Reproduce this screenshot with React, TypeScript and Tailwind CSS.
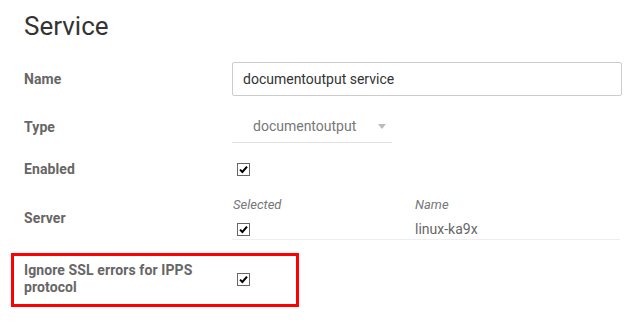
import React from 'react';

function Check() {
  return (
    <span className="flex h-[13px] w-[13px] items-center justify-center border border-[#666] bg-white">
      <svg viewBox="0 0 11 11" className="h-[11px] w-[11px]">
        <path d="M2 5.6 L4.4 8 L9 2.6" fill="none" stroke="#000" strokeWidth={2} />
      </svg>
    </span>
  );
}

function Label({ children }: { children: React.ReactNode }) {
  return (
    <div className="w-[208px] shrink-0 pr-[12px] text-[14px] font-bold leading-[17px] tracking-[0.1px] text-[#666]">
      {children}
    </div>
  );
}

export default function App() {
  return (
    <div className="h-[325px] w-[634px] overflow-hidden bg-white px-6 font-['Roboto',sans-serif]">
      <h1 className="pt-[11px] text-[26px] leading-[30px] text-[#333]">Service</h1>

      {/* Name */}
      <div className="mt-[21px] flex h-[34px] items-center">
        <Label>Name</Label>
        <div className="flex h-[34px] w-[390px] shrink-0 items-center rounded-[2px] border border-[#ccc] px-[10px] text-[14px] text-[#333]">
          documentoutput service
        </div>
      </div>

      {/* Type */}
      <div className="mt-[15px] flex h-[32px] items-center">
        <Label>Type</Label>
        <div className="flex h-[32px] w-[160px] shrink-0 items-center border-b border-[#e0e0e0] pl-[21px] text-[14px] text-[#777]">
          <span>documentoutput</span>
          <span className="ml-[22px] h-0 w-0 border-x-[4.5px] border-t-[5px] border-x-transparent border-t-[#bbb]" />
        </div>
      </div>

      {/* Enabled */}
      <div className="mt-[17px] flex h-[18px] items-center">
        <Label>Enabled</Label>
        <div className="pl-[5px]">
          <Check />
        </div>
      </div>

      {/* Server */}
      <div className="mt-[18px] flex items-center">
        <Label>Server</Label>
        <div className="w-[388px] shrink-0">
          <div className="flex h-[18px] items-center text-[13px] italic text-[#777]">
            <span className="w-[183px] pl-[1px]">Selected</span>
            <span>Name</span>
          </div>
          <div className="flex h-[26px] items-center border-b border-[#eee] pt-[6px]">
            <span className="w-[183px] pl-[5px]">
              <Check />
            </span>
            <span className="text-[14px] text-[#666]">linux-ka9x</span>
          </div>
        </div>
      </div>

      {/* Ignore SSL */}
      <div className="ml-[-13px] mt-[13px] flex h-[54px] w-[288px] items-center border-[3px] border-[#f00] pb-[2px] pl-[10px]">
        <Label>Ignore SSL errors for IPPS protocol</Label>
        <div className="pl-[5px]">
          <Check />
        </div>
      </div>
    </div>
  );
}
